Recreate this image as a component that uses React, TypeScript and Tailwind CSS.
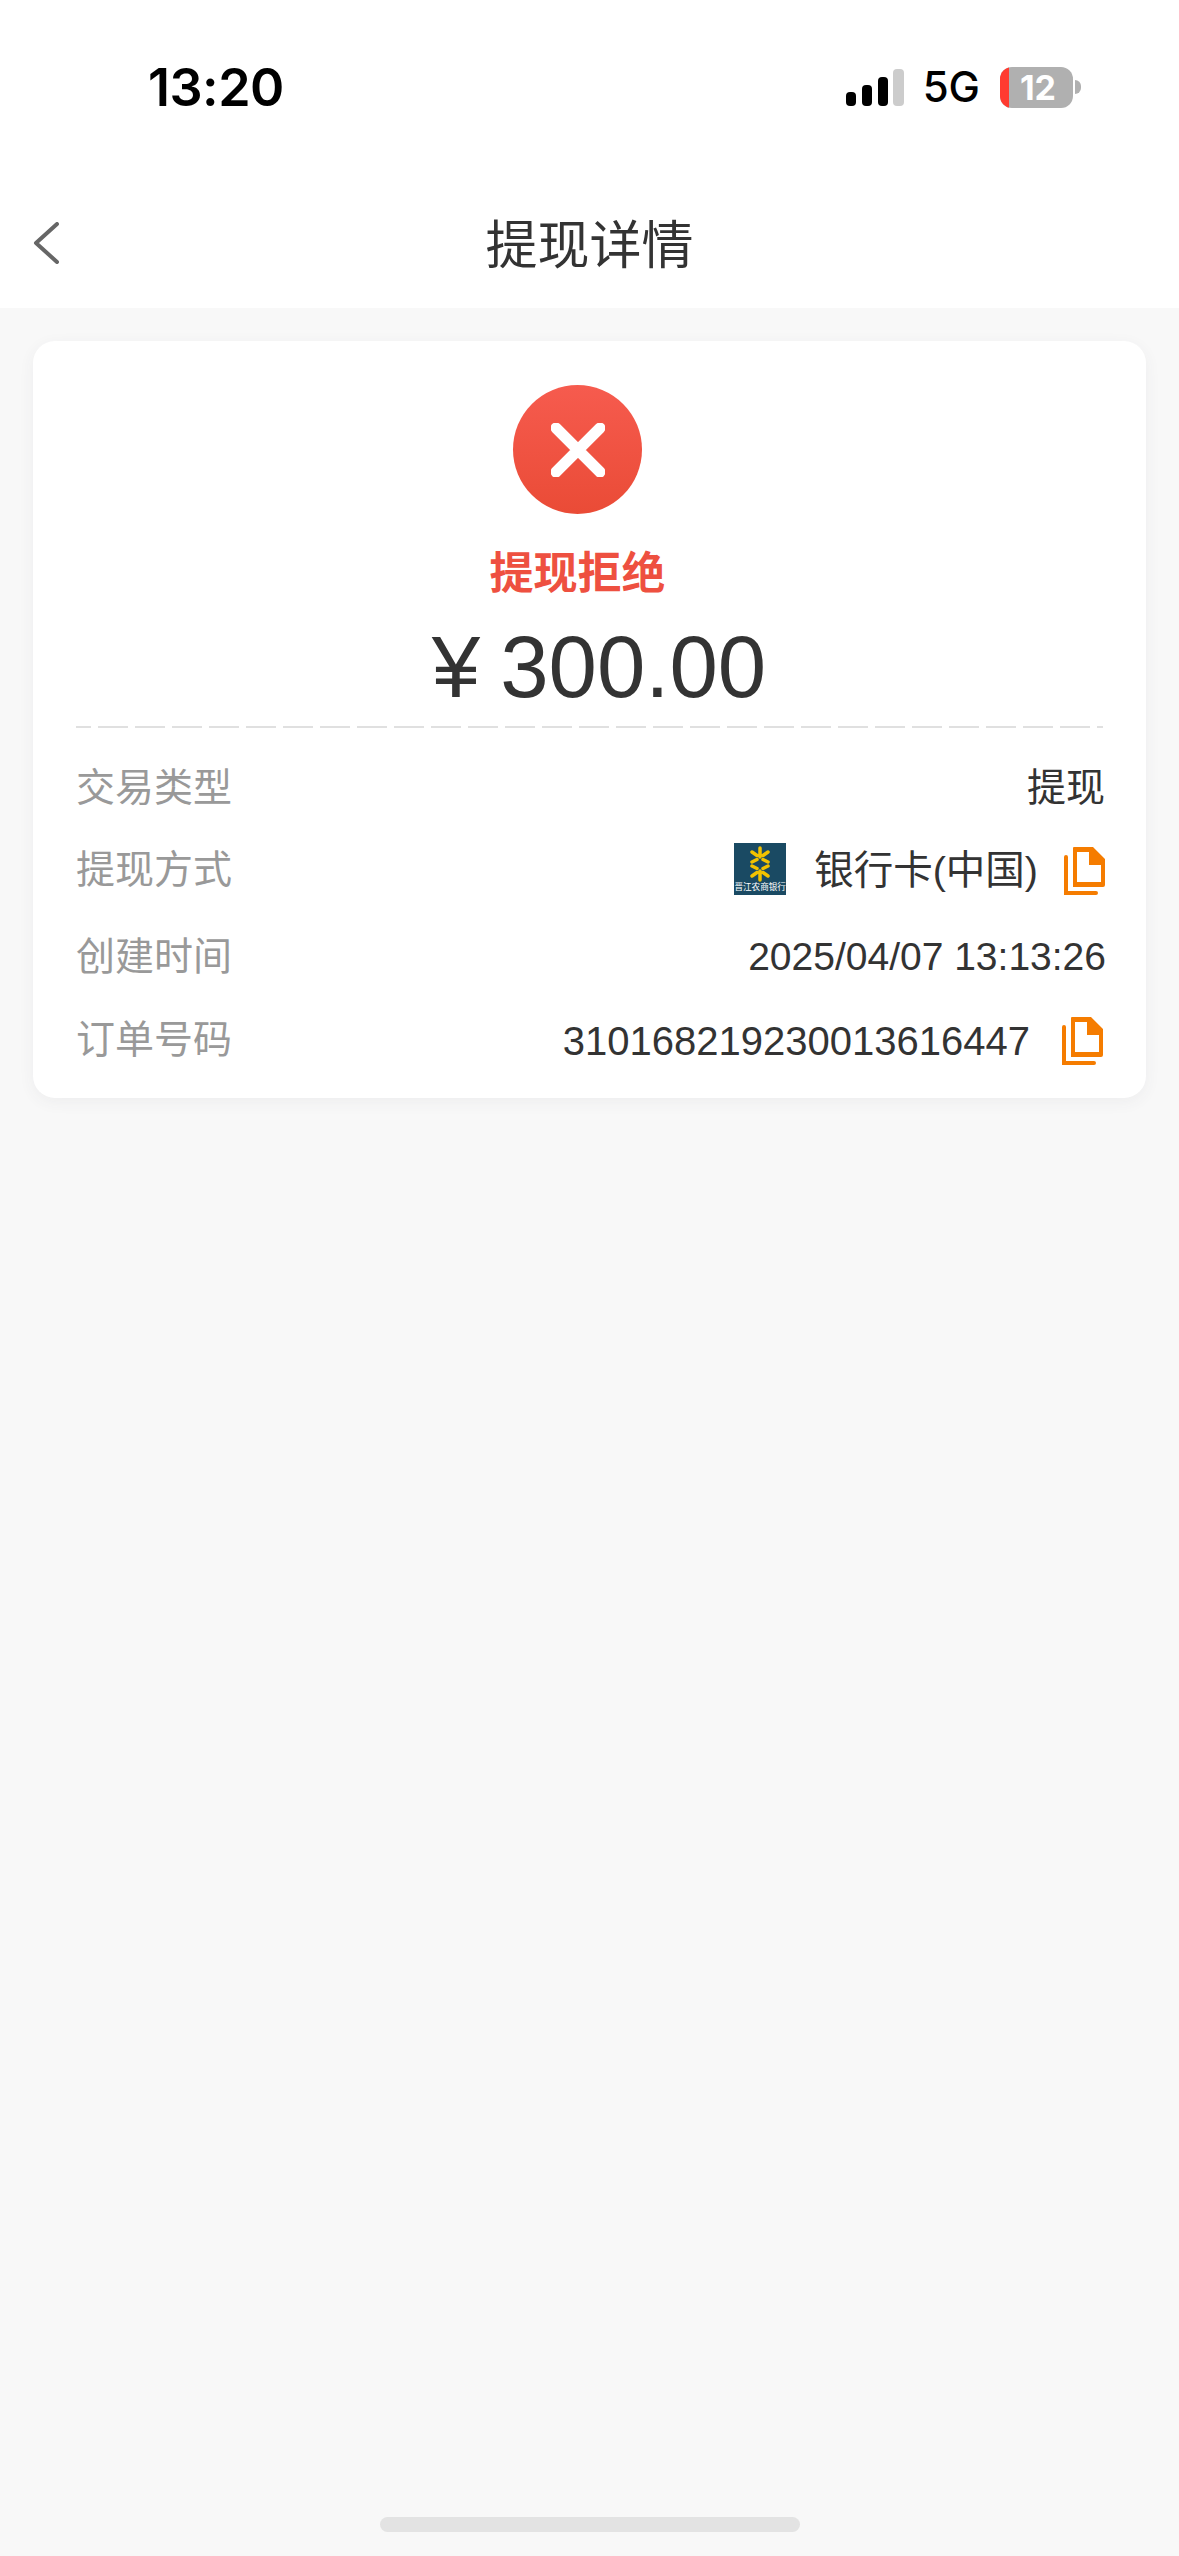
const cjk = "font-['Liberation_Sans','Noto_Sans_CJK_SC',sans-serif]";

const CopyIcon = () => (
  <svg width="41" height="48" viewBox="0 0 41 48" className="shrink-0">
    <path
      d="M10 0h19l12 12v26a2 2 0 0 1-2 2H9V1a1 1 0 0 1 1-1zM13 5v30h24V18H25V5H13z"
      fill="#f57c00"
      fillRule="evenodd"
    />
    <path d="M0 10a2 2 0 0 1 4 0v34h28a2 2 0 0 1 0 4H0V10z" fill="#f57c00" />
  </svg>
);

const BankLogo = () => (
  <div className="flex h-[52px] w-[52px] shrink-0 flex-col items-center overflow-hidden bg-[#1a4a63]">
    <svg width="22" height="36" viewBox="0 0 22 36" className="mt-[3px] shrink-0">
      <g stroke="#f2c200" strokeWidth="3.500" strokeLinecap="round" fill="none">
        <path d="M11 2v9M3 6l5 3.500M19 6l-5 3.500M3 16l5-2.500M19 16l-5-2.500" />
        <path d="M11 34v-9M3 30l5-3.500M19 30l-5-3.500M3 20l5 2.500M19 20l-5 2.500" />
      </g>
    </svg>
    <span className="text-[8.6px] leading-[11px] whitespace-nowrap text-white">
      晋江农商银行
    </span>
  </div>
);

export default function App() {
  return (
    <div className={`${cjk} flex h-[2556px] w-[1179px] flex-col overflow-hidden bg-[#f8f8f8]`}>
      {/* Status bar + nav */}
      <div className="h-[308px] shrink-0 bg-white">
        <div className="flex h-[176px] items-start justify-between pt-[62px] pr-[98px] pl-[148px]">
          <span className="font-['Inter'] text-[52px] leading-[52px] font-semibold tracking-[-0.5px] text-black">
            13:20
          </span>
          <div className="flex items-center">
            <svg width="58" height="38" viewBox="0 0 58 38" className="mt-[4px]">
              <rect x="0" y="23" width="10" height="14" rx="4" fill="#000" />
              <rect x="16" y="16" width="10" height="21" rx="4" fill="#000" />
              <rect x="32" y="8" width="10" height="29" rx="4" fill="#000" />
              <rect x="47" y="0" width="11" height="37" rx="4" fill="#ccc" />
            </svg>
            <span className="mt-[3px] ml-[19px] font-['Inter'] text-[42px] leading-[44px] font-medium text-black">
              5G
            </span>
            <div className="mt-[3px] ml-[20px] flex items-center">
              <div className="flex h-[41px] w-[73px] overflow-hidden rounded-[12px] bg-[#b0b0b0]">
                <div className="h-full w-[9px] bg-[#ff3b30]" />
                <span className="flex-1 pr-[6px] text-center font-['Inter'] text-[34px] leading-[41px] font-bold text-white">
                  12
                </span>
              </div>
              <div className="ml-[2px] h-[14px] w-[6px] rounded-r-full bg-[#b0b0b0]" />
            </div>
          </div>
        </div>
        <div className="relative flex h-[132px] items-start justify-center pt-[35px]">
          <svg width="26" height="42" viewBox="0 0 26 42" className="absolute top-[46px] left-[33px]">
            <path d="M24 2 3 21l21 19" fill="none" stroke="#666" strokeWidth="4" strokeLinecap="round" strokeLinejoin="round" />
          </svg>
          <span className="text-[52px] leading-[70px] text-[#333]">提现详情</span>
        </div>
      </div>

      {/* Card */}
      <div className="mx-[33px] mt-[33px] flex flex-col rounded-[22px] bg-white pt-[44px] pb-[21px] shadow-[0_4px_16px_rgba(60,70,90,0.06)]">
        <div className="flex flex-col items-center pr-[24px]">
          <div className="flex h-[129px] w-[129px] items-center justify-center rounded-full bg-gradient-to-b from-[#f65b4e] to-[#ea4b36]">
            <svg width="54" height="54" viewBox="0 0 54 54">
              <path d="M5 5l44 44M49 5 5 49" stroke="#fff" strokeWidth="11" strokeLinecap="round" />
            </svg>
          </div>
          <span className="mt-[35px] text-[44px] leading-[50px] font-bold text-[#ee5040]">
            提现拒绝
          </span>
        </div>
        <div className="mt-[18px] flex items-center justify-center pl-[19px] text-[87px] leading-[100px] text-[#333]">
          <span className="mr-[20px]">¥</span>
          <span>300.00</span>
        </div>
        <div className="mx-[43px] mt-[9px] h-[2px] bg-[repeating-linear-gradient(90deg,#e0e0e0_0,#e0e0e0_15px,transparent_15px,transparent_22px,#e0e0e0_22px,#e0e0e0_37px)]" />

        <div className="mt-[18px] flex flex-col px-[43px] text-[39px] text-[#333]">
          <div className="flex h-[84px] items-center justify-between">
            <span className="text-[#999]">交易类型</span>
            <span className="mr-[-2px]">提现</span>
          </div>
          <div className="flex h-[81px] items-center justify-between">
            <span className="text-[#999]">提现方式</span>
            <div className="mr-[-2px] flex items-center">
              <div className="mt-[-3px]">
                <BankLogo />
              </div>
              <span className="mr-[26px] ml-[28px] text-[39.500px]">银行卡(中国)</span>
              <CopyIcon />
            </div>
          </div>
          <div className="flex h-[93px] items-center justify-between">
            <span className="text-[#999]">创建时间</span>
            <span className="mr-[-3px]">2025/04/07 13:13:26</span>
          </div>
          <div className="flex h-[73px] items-center justify-between">
            <span className="text-[#999]">订单号码</span>
            <div className="flex items-center">
              <span className="mr-[32px] text-[40px]">310168219230013616447</span>
              <CopyIcon />
            </div>
          </div>
        </div>
      </div>

      {/* Home indicator */}
      <div className="mt-auto mb-[24px] h-[15px] w-[420px] self-center rounded-full bg-[#e3e3e3]" />
    </div>
  );
}
